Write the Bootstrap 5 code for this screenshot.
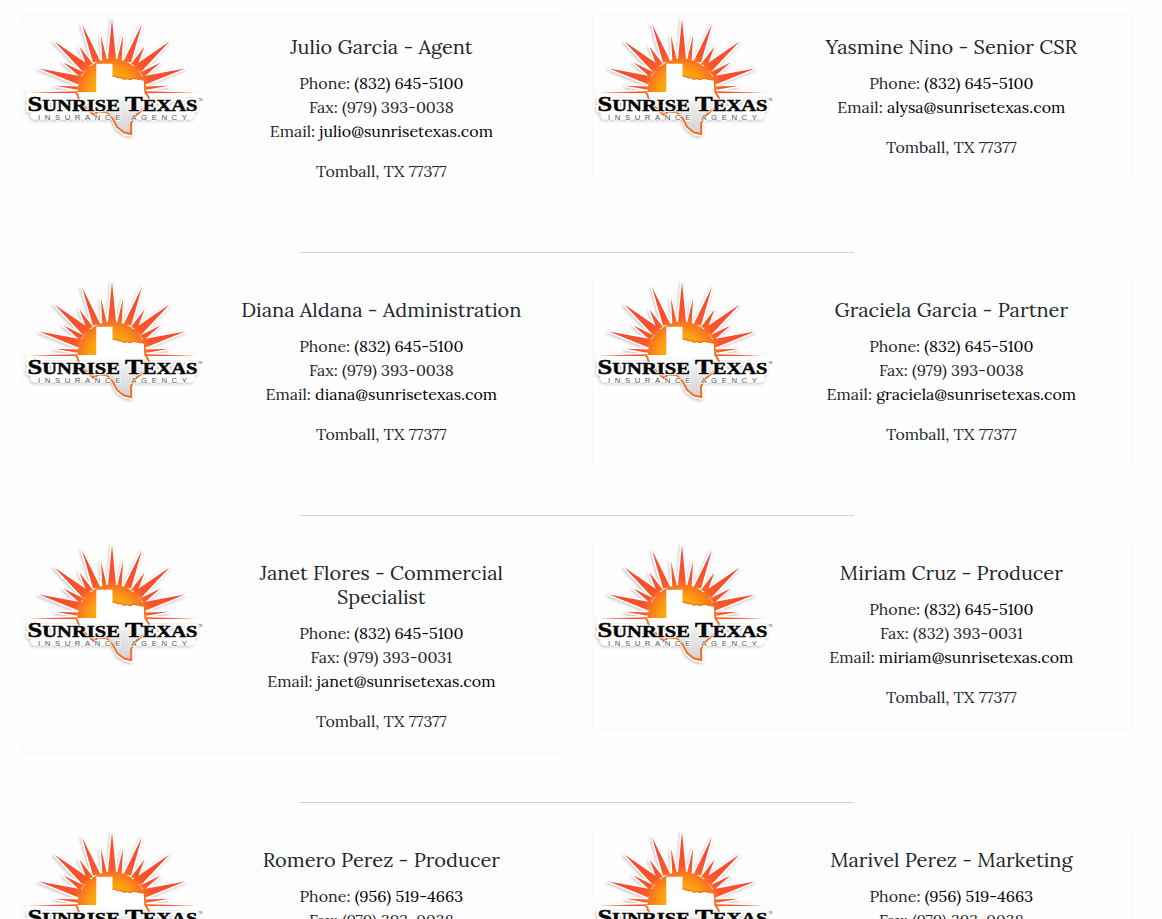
<!DOCTYPE html>
<html lang="en">
<head>
<meta charset="utf-8">
<meta name="viewport" content="width=device-width, initial-scale=1">
<title>Sunrise Texas Insurance Agency - Our Team</title>
<link href="https://cdn.jsdelivr.net/npm/bootstrap@5.3.0/dist/css/bootstrap.min.css" rel="stylesheet">
<style>
body{font-family:Lora,"Liberation Serif",serif;font-size:16px;line-height:24px;color:#212529;background:#fefefe;overflow:hidden}
.team{width:1140px;height:919px;overflow:hidden;margin-left:7px;padding-top:14px}
.team>.row{--bs-gutter-x:30px;margin:0 0 48px}
.member{border:1px solid #f8f8f8;border-radius:4px;background:#fefefe}
.member .card-body{flex:none;width:66.6667%;padding:20px}
.member h5{font-size:20px;line-height:24px;margin-bottom:12px;font-weight:400}
.member a{color:#000;text-decoration:none}
.divider{width:555px;height:1px;margin:0 0 24px 292px;background:#d4cfd1}
.logo{width:180px;height:128px;flex:none;margin-right:-1px}
</style>
</head>
<body>
<svg width="0" height="0" class="position-absolute" aria-hidden="true">
<defs>
<radialGradient id="sun" gradientUnits="userSpaceOnUse" cx="112" cy="93" r="64">
<stop offset="0" stop-color="#fcb900"/><stop offset=".33" stop-color="#fba40d"/><stop offset=".48" stop-color="#fb801c"/><stop offset=".62" stop-color="#fb552c"/><stop offset="1" stop-color="#fb4930"/>
</radialGradient>
<linearGradient id="land" x1="0" y1="0" x2="0" y2="1"><stop offset="0" stop-color="#fff"/><stop offset=".42" stop-color="#fff"/><stop offset=".65" stop-color="#e8e8e8"/><stop offset="1" stop-color="#d3d3d3"/></linearGradient>
<filter id="soft" x="-20%" y="-20%" width="140%" height="140%"><feDropShadow dx="-.8" dy="1.3" stdDeviation="1.8" flood-color="#000" flood-opacity=".25"/></filter>
<g id="rays">
<path d="M77.500 93A34.500 34.500 0 0 1 146.500 93Z"/>
<path d="M107.800 61L112 19L116.200 61Z"/>
<path id="half" d="M93 62.500L82 24L100.500 61.500ZM102.300 60.500L101 35.500L107 60.500ZM87 66.500L79.500 46.500L93 64ZM83.500 72.500L54.500 41.500L91 66.500ZM80 77L63.500 62.500L84 72.500ZM78.500 84.500L39 68.500L82.500 76.500ZM77.500 89.800L55.500 85.800L79 86.500ZM79 93.200L28 92.500L79 91.300Z"/>
<use href="#half" transform="translate(224 0) scale(-1 1)"/>
</g>
<path id="texas" d="M96.300 63.700H112.500V76.300L115 76.200 118 77.700 121 77.500 124 79.300 127 78.500 130 79.600 134 78.200 139 79.500 144.300 80.300 145 91.500 149 98 148.500 105 141 111 134 117 131 123.500 131.300 134 124 132.500 117 127 113 119 106.500 112 99 111.500 94.500 117 86 111 81 100 75.500 92H96.300Z"/>
<g id="name" font-family="Liberation Serif, serif" font-weight="700" font-size="17">
<text x="27.500" y="110.800" textLength="170" lengthAdjust="spacingAndGlyphs"><tspan font-size="22">S</tspan>UNRISE <tspan font-size="22">T</tspan>EXAS</text>
</g>
<g id="tagline" font-family="Liberation Sans, sans-serif" font-size="7.800">
<text x="38" y="120.300" textLength="149">INSURANCE AGENCY</text>
</g>
<symbol id="sunrise-logo" viewBox="23 15 180 128">
<g filter="url(#soft)" fill="#fff" stroke="#fff" stroke-linejoin="round">
<use href="#rays" stroke-width="2.800"/>
<path d="M106 111L113 119 117 128 125 134 132 135 133 120 142 111Z" stroke-width="3"/>
<use href="#name" stroke-width="4"/>
<path d="M35 115H190" stroke-width="9" stroke-linecap="round"/>
</g>
<use href="#rays" fill="url(#sun)"/>
<path d="M26 93.500H199V97H26Z" fill="#fff"/>
<use href="#texas" fill="url(#land)"/>
<path d="M75.500 92Q78 94 78 97L82 104 88 110 94 115L98 111.500 106.500 112 113 119 117 127 124 132.500 131.300 134 131 123.500 134 117 141 111 148.500 105 149 98 145 91.500" fill="none" stroke="#f66b20" stroke-width="1.900"/>
<path d="M112.500 76.300L115 76.200 118 77.700 121 77.500 124 79.300 127 78.500 130 79.600 134 78.200 139 79.500 144.300 80.300 145 92" fill="none" stroke="#f06a15" stroke-width="1.100"/>
<use href="#name" fill="#fff" stroke="#fff" stroke-width="2.400" stroke-linejoin="round"/>
<use href="#name" fill="#050505" stroke="#050505" stroke-width=".5"/>
<use href="#tagline" fill="#555" stroke="#fff" stroke-width="1.300" paint-order="stroke"/>
<text x="198.500" y="101" font-family="Liberation Sans, sans-serif" font-size="2.600" fill="#333">TM</text>
</symbol>
</defs>
</svg>
<main class="team">
<div class="row align-items-start">
<div class="col-6"><div class="card member flex-row"><svg class="logo" role="img" aria-label="Sunrise Texas"><use href="#sunrise-logo"/></svg><div class="card-body text-center"><h5>Julio Garcia - Agent</h5><p class="mb-3">Phone: <a href="#">(832) 645-5100</a><br>Fax: (979) 393-0038<br>Email: <a href="#">julio@sunrisetexas.com</a></p><p class="mb-0">Tomball, TX 77377</p></div></div></div>
<div class="col-6"><div class="card member flex-row"><svg class="logo" role="img" aria-label="Sunrise Texas"><use href="#sunrise-logo"/></svg><div class="card-body text-center"><h5>Yasmine Nino - Senior CSR</h5><p class="mb-3">Phone: <a href="#">(832) 645-5100</a><br>Email: <a href="#">alysa@sunrisetexas.com</a></p><p class="mb-0">Tomball, TX 77377</p></div></div></div>
</div>
<div class="divider"></div>
<div class="row align-items-start">
<div class="col-6"><div class="card member flex-row"><svg class="logo" role="img" aria-label="Sunrise Texas"><use href="#sunrise-logo"/></svg><div class="card-body text-center"><h5>Diana Aldana - Administration</h5><p class="mb-3">Phone: <a href="#">(832) 645-5100</a><br>Fax: (979) 393-0038<br>Email: <a href="#">diana@sunrisetexas.com</a></p><p class="mb-0">Tomball, TX 77377</p></div></div></div>
<div class="col-6"><div class="card member flex-row"><svg class="logo" role="img" aria-label="Sunrise Texas"><use href="#sunrise-logo"/></svg><div class="card-body text-center"><h5>Graciela Garcia - Partner</h5><p class="mb-3">Phone: <a href="#">(832) 645-5100</a><br>Fax: (979) 393-0038<br>Email: <a href="#">graciela@sunrisetexas.com</a></p><p class="mb-0">Tomball, TX 77377</p></div></div></div>
</div>
<div class="divider"></div>
<div class="row align-items-start">
<div class="col-6"><div class="card member flex-row"><svg class="logo" role="img" aria-label="Sunrise Texas"><use href="#sunrise-logo"/></svg><div class="card-body text-center"><h5>Janet Flores - Commercial<br>Specialist</h5><p class="mb-3">Phone: <a href="#">(832) 645-5100</a><br>Fax: (979) 393-0031<br>Email: <a href="#">janet@sunrisetexas.com</a></p><p class="mb-0">Tomball, TX 77377</p></div></div></div>
<div class="col-6"><div class="card member flex-row"><svg class="logo" role="img" aria-label="Sunrise Texas"><use href="#sunrise-logo"/></svg><div class="card-body text-center"><h5>Miriam Cruz - Producer</h5><p class="mb-3">Phone: <a href="#">(832) 645-5100</a><br>Fax: (832) 393-0031<br>Email: <a href="#">miriam@sunrisetexas.com</a></p><p class="mb-0">Tomball, TX 77377</p></div></div></div>
</div>
<div class="divider"></div>
<div class="row align-items-start">
<div class="col-6"><div class="card member flex-row"><svg class="logo" role="img" aria-label="Sunrise Texas"><use href="#sunrise-logo"/></svg><div class="card-body text-center"><h5>Romero Perez - Producer</h5><p class="mb-3">Phone: <a href="#">(956) 519-4663</a><br>Fax: (979) 393-0038</p></div></div></div>
<div class="col-6"><div class="card member flex-row"><svg class="logo" role="img" aria-label="Sunrise Texas"><use href="#sunrise-logo"/></svg><div class="card-body text-center"><h5>Marivel Perez - Marketing</h5><p class="mb-3">Phone: <a href="#">(956) 519-4663</a><br>Fax: (979) 393-0038</p></div></div></div>
</div>
</main>
<script src="https://cdn.jsdelivr.net/npm/bootstrap@5.3.0/dist/js/bootstrap.bundle.min.js"></script>
</body>
</html>
